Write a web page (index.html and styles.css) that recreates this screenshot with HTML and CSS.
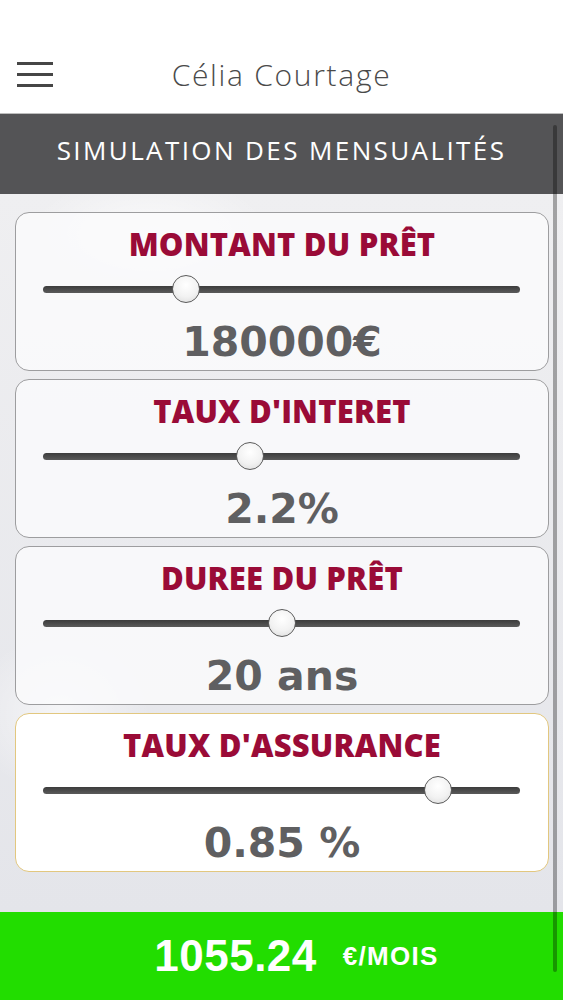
FILE: index.html
```html
<!DOCTYPE html>
<html lang="fr">
<head>
<meta charset="utf-8">
<title>Célia Courtage</title>
<link rel="stylesheet" href="styles.css">
</head>
<body>
<div class="screen">
  <header class="topbar">
    <button class="menu" aria-label="Menu">
      <span></span><span></span><span></span>
    </button>
    <h1 class="brand">Célia Courtage</h1>
    <div class="spacer"></div>
  </header>
  <div class="section-title">SIMULATION DES MENSUALITÉS</div>
  <main class="content">
    <section class="card">
      <h2 class="card-title">MONTANT DU PRÊT</h2>
      <div class="slider"><div class="track"></div><div class="thumb" style="left:30%"></div></div>
      <div class="value">180000€</div>
    </section>
    <section class="card">
      <h2 class="card-title">TAUX D'INTERET</h2>
      <div class="slider"><div class="track"></div><div class="thumb" style="left:43.4%"></div></div>
      <div class="value">2.2%</div>
    </section>
    <section class="card">
      <h2 class="card-title">DUREE DU PRÊT</h2>
      <div class="slider"><div class="track"></div><div class="thumb" style="left:50.1%"></div></div>
      <div class="value">20 ans</div>
    </section>
    <section class="card card-active">
      <h2 class="card-title">TAUX D'ASSURANCE</h2>
      <div class="slider"><div class="track"></div><div class="thumb" style="left:82.8%"></div></div>
      <div class="value">0.85 %</div>
    </section>
  </main>
  <footer class="result">
    <span class="amount">1055.24</span>
    <span class="unit">€/MOIS</span>
  </footer>
  <div class="scrollbar"></div>
</div>
</body>
</html>
```

FILE: styles.css
```css
* { box-sizing: border-box; }
html, body { margin: 0; padding: 0; }
body {
  width: 563px;
  height: 1000px;
  overflow: hidden;
  background: #ebebee;
  font-family: "Open Sans", "Liberation Sans", sans-serif;
}
.screen {
  position: relative;
  width: 563px;
  height: 1000px;
  display: flex;
  flex-direction: column;
}
.topbar {
  height: 113px;
  padding-top: 40px;
  background: #ffffff;
  display: grid;
  grid-template-columns: 1fr auto 1fr;
  align-items: center;
}
.menu {
  justify-self: start;
  margin-left: 17px;
  margin-top: -4px;
  width: 36px;
  height: 25px;
  padding: 0;
  border: 0;
  background: transparent;
  display: flex;
  flex-direction: column;
  justify-content: space-between;
}
.menu span {
  display: block;
  width: 36px;
  height: 3px;
  background: #464646;
}
.brand {
  margin: 0;
  margin-top: -4px;
  font-family: "Open Sans", sans-serif;
  font-weight: 300;
  font-size: 30px;
  letter-spacing: 1.7px;
  color: #4a4a4a;
}
.section-title {
  height: 81px;
  background: #545456;
  border-top: 1px solid #bdbdbd;
  color: #ffffff;
  font-size: 26px;
  font-weight: 400;
  letter-spacing: 2.4px;
  display: flex;
  align-items: center;
  justify-content: center;
  padding-bottom: 8px;
}
.content {
  flex: 1;
  padding: 18px 14px 0 15px;
  display: flex;
  flex-direction: column;
  gap: 8px;
  background:
    radial-gradient(ellipse 120px 60px at 150px 40px, rgba(255,255,255,0.7), transparent),
    radial-gradient(ellipse 90px 80px at 60px 520px, rgba(255,255,255,0.6), transparent),
    linear-gradient(#efeff1, #e4e5ea);
}
.card {
  height: 159px;
  border: 1px solid #9d9d9f;
  border-radius: 14px;
  background: rgba(250, 250, 251, 0.85);
  display: flex;
  flex-direction: column;
}
.card-active {
  background: #ffffff;
  border: 1.5px solid #e2c77f;
}
.card-title {
  margin: 0;
  height: 63px;
  line-height: 63px;
  text-align: center;
  font-family: "Open Sans", sans-serif;
  font-weight: 800;
  font-size: 31px;
  letter-spacing: 0.2px;
  color: #9a0b37;
}
.slider {
  position: relative;
  height: 26px;
  margin: 0 28px 0 27px;
  display: flex;
  align-items: center;
}
.track {
  width: 100%;
  height: 7px;
  border-radius: 4px;
  background: linear-gradient(#3c3c3c, #5a5a5a);
}
.thumb {
  position: absolute;
  top: 50%;
  width: 28px;
  height: 28px;
  border-radius: 50%;
  transform: translate(-50%, -50%);
  border: 1.5px solid #5b5b5b;
  background: radial-gradient(circle at 50% 35%, #ffffff 0%, #f2f2f2 55%, #d9d9d9 100%);
}
.value {
  margin-top: 12px;
  height: 56px;
  line-height: 56px;
  text-align: center;
  font-family: "DejaVu Sans", "Open Sans", sans-serif;
  font-weight: 700;
  font-size: 41px;
  color: #5f5f61;
}
.result {
  height: 88px;
  background: #22dd00;
  display: flex;
  align-items: center;
  justify-content: center;
  gap: 26px;
  color: #ffffff;
  font-family: "Liberation Sans", Arial, sans-serif;
  font-weight: 700;
  padding-left: 30px;
}
.amount {
  font-size: 44px;
  letter-spacing: 0.5px;
}
.unit {
  font-size: 26px;
  letter-spacing: 1.3px;
}
.scrollbar {
  position: absolute;
  left: 553px;
  top: 125px;
  width: 4px;
  height: 847px;
  border-radius: 2px;
  background: rgba(0, 0, 0, 0.32);
}
```
